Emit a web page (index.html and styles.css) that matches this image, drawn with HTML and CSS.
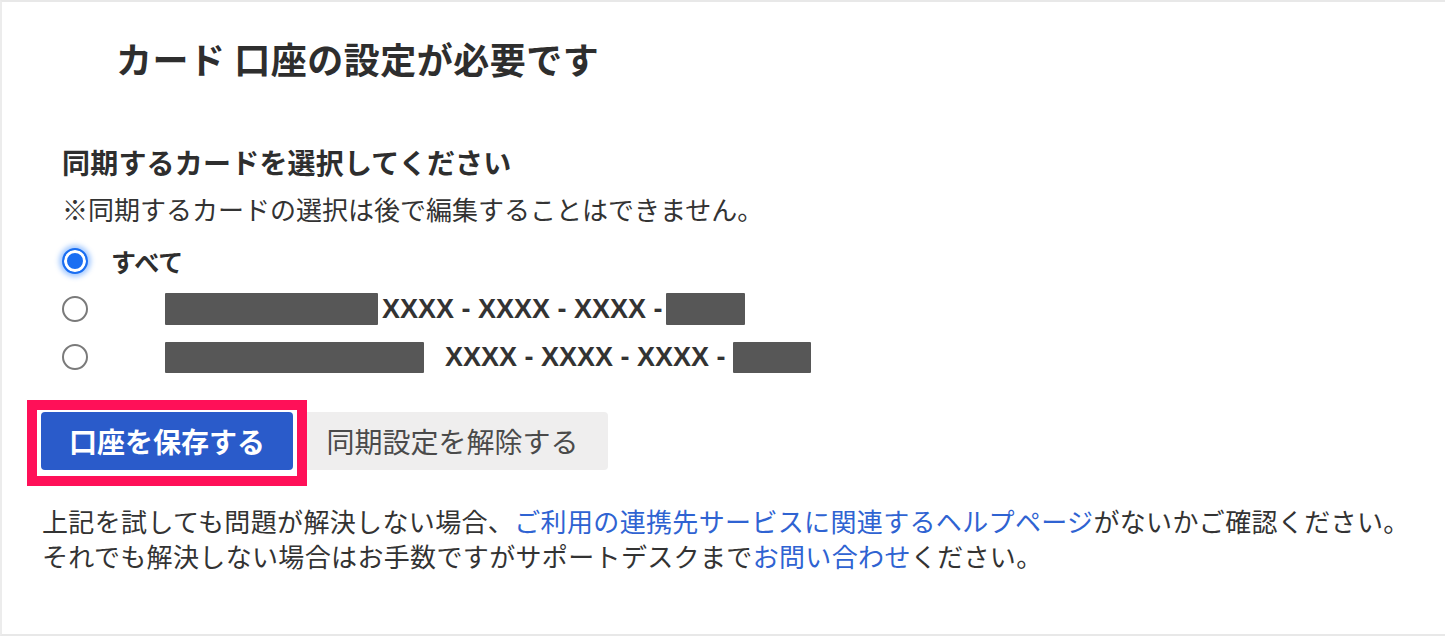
FILE: index.html
```html
<!DOCTYPE html>
<html lang="ja">
<head>
<meta charset="utf-8">
<title>カード 口座の設定が必要です</title>
<link rel="stylesheet" href="styles.css">
</head>
<body>
<div class="page">
  <h1 class="title">カード 口座の設定が必要です</h1>
  <section class="form">
    <h2 class="form-heading">同期するカードを選択してください</h2>
    <p class="note">※同期するカードの選択は後で編集することはできません。</p>
    <ul class="options">
      <li class="option">
        <input class="radio" type="radio" name="card" checked>
        <span class="option-label">すべて</span>
      </li>
      <li class="option">
        <input class="radio" type="radio" name="card">
        <span class="mask mask-a1"></span>
        <span class="card-num num-a">XXXX - XXXX - XXXX -</span>
        <span class="mask mask-a2"></span>
      </li>
      <li class="option">
        <input class="radio" type="radio" name="card">
        <span class="mask mask-b1"></span>
        <span class="card-num num-b">XXXX - XXXX - XXXX -</span>
        <span class="mask mask-b2"></span>
      </li>
    </ul>
  </section>
  <div class="actions">
    <button class="btn btn-primary" type="button">口座を保存する</button>
    <button class="btn btn-secondary" type="button">同期設定を解除する</button>
    <span class="highlight"></span>
  </div>
  <p class="help">上記を試しても問題が解決しない場合、<a class="link" href="#">ご利用の連携先サービスに関連するヘルプページ</a>がないかご確認ください。<br>それでも解決しない場合はお手数ですがサポートデスクまで<a class="link" href="#">お問い合わせ</a>ください。</p>
</div>
</body>
</html>
```

FILE: styles.css
```css
* { box-sizing: border-box; }

html, body {
  margin: 0;
  padding: 0;
  background: #ffffff;
}

body {
  font-family: "Noto Sans CJK JP", "Noto Sans", sans-serif;
  color: #333333;
}

.page {
  width: 1445px;
  height: 636px;
  border-top: 2px solid #e8e8e8;
  border-bottom: 2px solid #e8e8e8;
  border-left: 2px solid #ececec;
  overflow: hidden;
}

.title {
  margin: 34px 0 0 114px;
  font-size: 36px;
  line-height: 44px;
  font-weight: 700;
  letter-spacing: 0.5px;
  color: #2e2e2e;
}

.form {
  margin: 64px 0 0 60px;
}

.form-heading {
  margin: 0;
  font-size: 28px;
  line-height: 36px;
  font-weight: 700;
  letter-spacing: 0.2px;
  color: #2e2e2e;
}

.note {
  margin: 11px 0 0;
  font-size: 26px;
  line-height: 36px;
  color: #333333;
}

.options {
  list-style: none;
  margin: 10px 0 0;
  padding: 0;
}

.option {
  display: flex;
  align-items: center;
  height: 48px;
}

.radio {
  appearance: none;
  -webkit-appearance: none;
  margin: 0;
  width: 26px;
  height: 26px;
  border: 2px solid #7a7a7a;
  border-radius: 50%;
  background: #ffffff;
  flex: none;
}

.radio:checked {
  border-color: #1a6ef2;
  background: #1a6ef2;
  box-shadow: inset 0 0 0 3px #ffffff, 0 0 5px 3px rgba(60, 140, 255, 0.45);
}

.option-label {
  margin-left: 23px;
  font-size: 25px;
  font-weight: 700;
  color: #2e2e2e;
}

.mask {
  display: block;
  height: 32px;
  background: #575757;
  border-radius: 1px;
  flex: none;
}

.mask-a1 { width: 213px; margin-left: 77px; }
.mask-a2 { width: 79px; margin-left: 3px; }
.mask-b1 { width: 259px; margin-left: 77px; height: 31px; }
.mask-b2 { width: 78px; margin-left: 7px; height: 31px; }

.card-num {
  font-family: "Liberation Sans", Arial, sans-serif;
  font-size: 27px;
  font-weight: 700;
  color: #333333;
  white-space: pre;
}

.num-a { margin-left: 4px; }
.num-b { margin-left: 21px; }

.actions {
  position: relative;
  display: flex;
  gap: 4px;
  margin: 31px 0 0 39px;
}

.btn {
  height: 58px;
  border: none;
  border-radius: 4px;
  font-family: "Noto Sans CJK JP", "Noto Sans", sans-serif;
  font-size: 28px;
  line-height: 58px;
  padding: 0;
  cursor: pointer;
}

.btn-primary {
  width: 252px;
  background: #2a5bca;
  color: #ffffff;
  font-weight: 700;
}

.btn-secondary {
  width: 311px;
  background: #efeeee;
  color: #4a4a4a;
  font-weight: 400;
}

.highlight {
  position: absolute;
  left: -14px;
  top: -12px;
  width: 280px;
  height: 86px;
  border: 10px solid #ff1058;
  pointer-events: none;
}

.help {
  margin: 33px 0 0 40px;
  font-size: 26px;
  line-height: 35px;
  letter-spacing: 0.35px;
  color: #333333;
}

.link {
  color: #2f63d2;
  text-decoration: none;
}
```
